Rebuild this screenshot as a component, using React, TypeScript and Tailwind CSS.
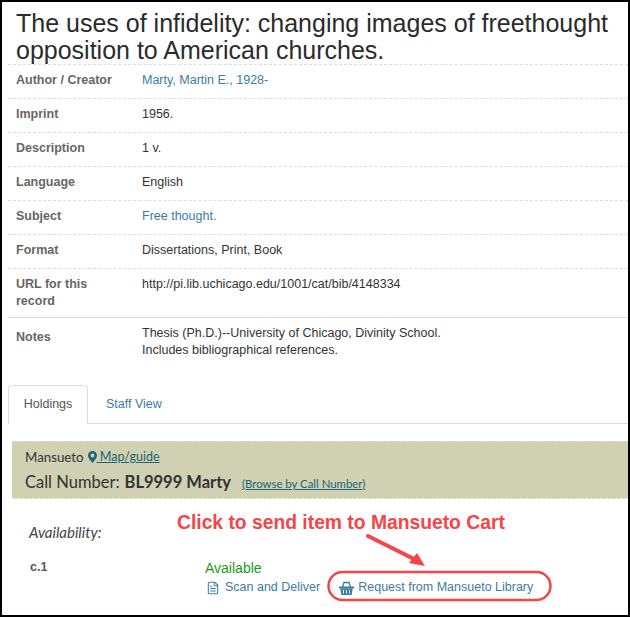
import { FileText } from "lucide-react";

const rows = [
  { label: "Author / Creator", value: "Marty, Martin E., 1928-", link: true },
  { label: "Imprint", value: "1956." },
  { label: "Description", value: "1 v." },
  { label: "Language", value: "English" },
  { label: "Subject", value: "Free thought.", link: true },
  { label: "Format", value: "Dissertations, Print, Book" },
];

const Basket = () => (
  <svg width="15" height="14" viewBox="0 0 15 14" className="text-[#3b7ca3]">
    <path d="M3.5 6 5 1.5h5L11.5 6" stroke="currentColor" strokeWidth="1.3" fill="none" />
    <path d="M0 5.5h15v2H0z" fill="currentColor" />
    <path d="M1.2 7.5h12.6L12.6 14H2.4z" fill="currentColor" />
    <path d="M4.5 9v3.5M7.5 9v3.5M10.5 9v3.5" stroke="#fff" strokeWidth="1" />
  </svg>
);

const Pin = () => (
  <svg width="9" height="12" viewBox="0 0 9 12" className="ml-[4px] text-[#1f6477]">
    <path
      fillRule="evenodd"
      d="M4.5 0a4.5 4.5 0 0 1 4.5 4.5C9 7 6 10 4.5 12 3 10 0 7 0 4.5A4.5 4.5 0 0 1 4.5 0Zm0 2.5a2 2 0 1 0 0 4 2 2 0 0 0 0-4Z"
      fill="currentColor"
    />
  </svg>
);

const App = () => {
  return (
    <div className="relative h-[617px] w-[630px] overflow-hidden border-2 border-black bg-white font-['Liberation_Sans',sans-serif] text-[12.5px] text-[#333]">
      <h1 className="pl-[14px] pt-[8px] text-[25px] leading-[27px] text-[#2b2b2b]">
        The uses of infidelity: changing images of freethought opposition to American churches.
      </h1>

      <div className="ml-[6px] border-t border-dashed border-[#ddd]">
        {rows.map((row) => (
          <div key={row.label} className="flex h-[34px] items-center border-b border-dashed border-[#ddd] pb-[2px]">
            <div className="w-[134px] pl-[8px] font-bold text-[#666]">{row.label}</div>
            <div className={row.link ? "text-[#3b7ca3]" : "text-[#333]"}>{row.value}</div>
          </div>
        ))}
        <div className="flex h-[49px] border-b border-[#ddd] pt-[7px] leading-[17px]">
          <div className="w-[134px] pl-[8px] font-bold text-[#666]">
            URL for this
            <br />
            record
          </div>
          <div>http://pi.lib.uchicago.edu/1001/cat/bib/4148334</div>
        </div>
        <div className="flex pt-[7px] leading-[17px]">
          <div className="w-[134px] pl-[8px] pt-[4px] font-bold text-[#666]">Notes</div>
          <div>
            Thesis (Ph.D.)--University of Chicago, Divinity School.
            <br />
            Includes bibliographical references.
          </div>
        </div>
      </div>

      <div className="ml-[6px] mt-[26px] flex h-[39px] border-b border-[#ddd]">
        <div className="flex h-[39px] w-[80px] items-center justify-center rounded-t border border-b-0 border-[#ddd] bg-white pb-[2px] text-[#555]">
          Holdings
        </div>
        <div className="ml-[18px] flex h-[38px] items-center text-[#3b7ca3]">Staff View</div>
      </div>

      <div className="ml-[10px] mt-[17px]">
        <div className="h-[58px] border-t border-b border-dashed border-b-[#eee] border-t-[#ddd] bg-[#cfd1b2] pl-[13px] pt-[7px] font-['Lato',sans-serif] text-[#333]">
          <div className="flex items-center text-[13.3px] leading-[16px]">
            Mansueto
            <Pin />
            <span className="whitespace-pre text-[12.5px] text-[#1f6477] underline"> Map/guide</span>
          </div>
          <div className="mt-[6px] flex items-baseline text-[16.5px] leading-[22px]">
            Call Number:
            <span className="ml-[5px] font-bold">BL9999 Marty</span>
            <span className="ml-[11px] text-[11.4px] text-[#1f6477] underline">(Browse by Call Number)</span>
          </div>
        </div>

        <div className="relative h-[117px]">
          <div className="pl-[17px] pt-[25px] font-['Lato',sans-serif] text-[15px] italic leading-[17px] text-[#444]">Availability:</div>
          <div className="flex pl-[18px] pt-[16px]">
            <div className="w-[175px] pt-[1px] font-bold text-[#555]">c.1</div>
            <div className="pt-[2px] leading-[19px]">
              <div className="text-[14px] text-[#1b9a1b]">Available</div>
              <div className="flex items-center text-[#3b7ca3]">
                <span className="ml-[1px] mr-[5px]">
                  <FileText size={14} strokeWidth={1.8} />
                </span>
                Scan and Deliver
                <span className="ml-[19px] mr-[4px]">
                  <Basket />
                </span>
                Request from Mansueto Library
              </div>
            </div>
          </div>
        </div>
      </div>

      <div className="absolute left-[175px] top-[510px] text-[19.3px] font-bold leading-[22px] text-[#f44549]">
        Click to send item to Mansueto Cart
      </div>
      <svg className="absolute left-0 top-0" width="626" height="613" viewBox="2 2 626 613" fill="none">
        <rect x="328.5" y="572" width="222" height="28" rx="14" stroke="#f44549" strokeWidth="2.5" />
        <path d="M368 536 416 560" stroke="#f44549" strokeWidth="4" strokeLinecap="round" />
        <path d="M425 566 409 563 417 553z" fill="#f44549" />
      </svg>
    </div>
  );
};

export default App;
